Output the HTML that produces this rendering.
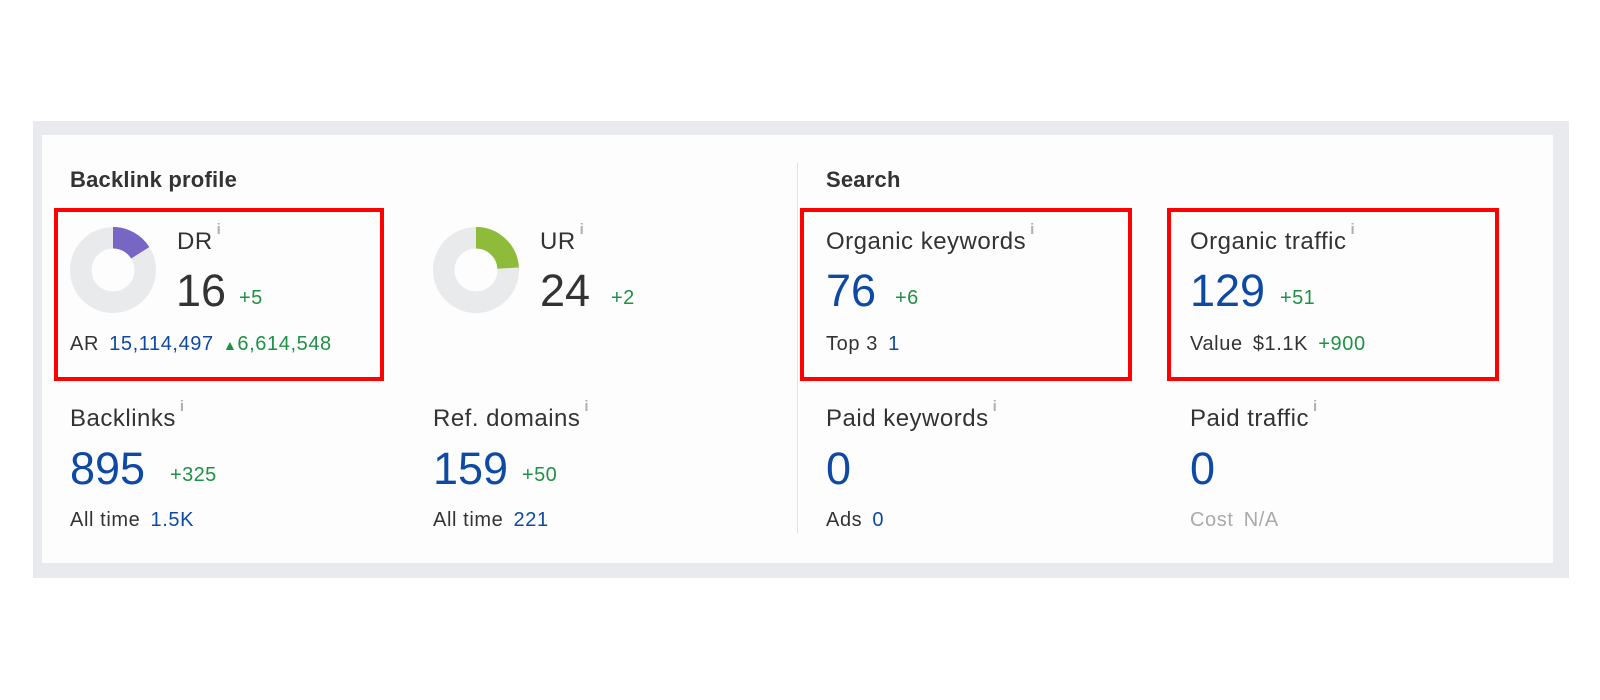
<!DOCTYPE html>
<html><head><meta charset="utf-8"><style>
*{margin:0;padding:0;box-sizing:border-box}
body{width:1600px;height:700px;background:#fff;position:relative;overflow:hidden;font-family:"Liberation Sans",Arial,sans-serif;color:#333}
.a{position:absolute;white-space:nowrap}
.outer{left:33px;top:121px;width:1536px;height:457px;background:#e8eaed}
.inner{left:42px;top:135px;width:1511px;height:428px;background:#fdfdfd}
.h{font-weight:bold;font-size:22px;color:#333;letter-spacing:0.2px}
.lbl{font-size:24px;color:#333;letter-spacing:0.5px}
.lbl sup{font-size:15px;color:#b0b0b0;font-weight:bold;position:relative;top:-6px;margin-left:4px}
.big{font-size:45px;color:#333;letter-spacing:0px}
.blue{color:#0e4aa3}
.g{color:#1f9145}
.d{font-size:20px;letter-spacing:0.4px}
.sub{font-size:20px;color:#333;letter-spacing:0.6px}
.red{border:4px solid #f00}
</style></head><body>
<div class="a outer"></div>
<div class="a inner"></div>
<div class="a" style="left:797px;top:163px;width:1px;height:370px;background:#e2e2e2"></div>

<div class="a h" style="left:70px;top:167px">Backlink profile</div>
<div class="a h" style="left:826px;top:167px">Search</div>

<div class="a red" style="left:54px;top:208px;width:330px;height:173px"></div>
<div class="a red" style="left:800px;top:208px;width:332px;height:173px"></div>
<div class="a red" style="left:1167px;top:208px;width:332px;height:173px"></div>

<svg class="a" style="left:70px;top:227px" width="86" height="86" viewBox="0 0 84 84">
<circle cx="42" cy="42" r="31.5" fill="none" stroke="#e9eaec" stroke-width="21"/>
<circle cx="42" cy="42" r="31.5" fill="none" stroke="#7866c4" stroke-width="21" stroke-dasharray="31.67 200" transform="rotate(-90 42 42)"/>
</svg>
<svg class="a" style="left:433px;top:227px" width="86" height="86" viewBox="0 0 84 84">
<circle cx="42" cy="42" r="31.5" fill="none" stroke="#e9eaec" stroke-width="21"/>
<circle cx="42" cy="42" r="31.5" fill="none" stroke="#8fbb3a" stroke-width="21" stroke-dasharray="47.5 200" transform="rotate(-90 42 42)"/>
</svg>

<div class="a lbl" style="left:177px;top:227px">DR<sup>i</sup></div>
<div class="a big" style="left:176px;top:265px">16</div>
<div class="a d g" style="left:239px;top:287px">+5</div>
<div class="a sub" style="left:70px;top:333px">AR <span class="blue" style="margin-left:4px">15,114,497</span> <span class="g" style="font-size:14px;margin-left:3px">▲</span><span class="g">6,614,548</span></div>

<div class="a lbl" style="left:540px;top:227px">UR<sup>i</sup></div>
<div class="a big" style="left:540px;top:265px">24</div>
<div class="a d g" style="left:611px;top:287px">+2</div>

<div class="a lbl" style="left:826px;top:227px">Organic keywords<sup>i</sup></div>
<div class="a big blue" style="left:826px;top:265px">76</div>
<div class="a d g" style="left:895px;top:287px">+6</div>
<div class="a sub" style="left:826px;top:333px">Top 3 <span class="blue" style="margin-left:4px">1</span></div>

<div class="a lbl" style="left:1190px;top:227px">Organic traffic<sup>i</sup></div>
<div class="a big blue" style="left:1190px;top:265px">129</div>
<div class="a d g" style="left:1280px;top:287px">+51</div>
<div class="a sub" style="left:1190px;top:333px">Value <span style="margin-left:4px">$1.1K</span> <span class="g" style="margin-left:4px">+900</span></div>

<div class="a lbl" style="left:70px;top:404px">Backlinks<sup>i</sup></div>
<div class="a big blue" style="left:70px;top:443px">895</div>
<div class="a d g" style="left:170px;top:464px">+325</div>
<div class="a sub" style="left:70px;top:509px">All time <span class="blue" style="margin-left:4px">1.5K</span></div>

<div class="a lbl" style="left:433px;top:404px">Ref. domains<sup>i</sup></div>
<div class="a big blue" style="left:433px;top:443px">159</div>
<div class="a d g" style="left:522px;top:464px">+50</div>
<div class="a sub" style="left:433px;top:509px">All time <span class="blue" style="margin-left:4px">221</span></div>

<div class="a lbl" style="left:826px;top:404px">Paid keywords<sup>i</sup></div>
<div class="a big blue" style="left:826px;top:443px">0</div>
<div class="a sub" style="left:826px;top:509px">Ads <span class="blue" style="margin-left:4px">0</span></div>

<div class="a lbl" style="left:1190px;top:404px">Paid traffic<sup>i</sup></div>
<div class="a big blue" style="left:1190px;top:443px">0</div>
<div class="a sub" style="left:1190px;top:509px;color:#aaa">Cost <span style="margin-left:4px">N/A</span></div>
</body></html>
